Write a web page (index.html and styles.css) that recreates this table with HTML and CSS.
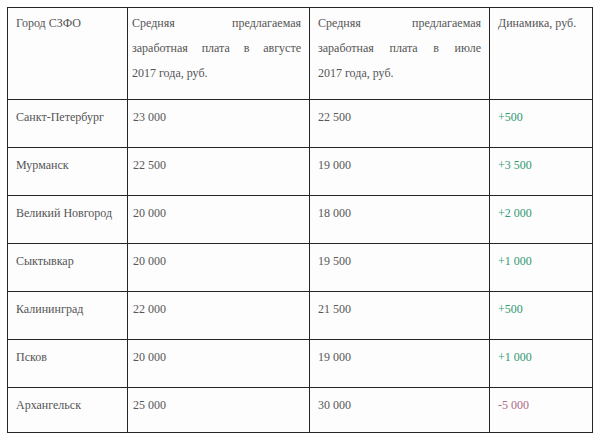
FILE: index.html
```html
<!DOCTYPE html>
<html lang="ru">
<head>
<meta charset="utf-8">
<title>Зарплаты СЗФО</title>
<link rel="stylesheet" href="styles.css">
</head>
<body>
<table class="salary">
  <colgroup>
    <col class="c-city">
    <col class="c-aug">
    <col class="c-jul">
    <col class="c-dyn">
  </colgroup>
  <thead>
    <tr>
      <th class="city">Город СЗФО</th>
      <th class="num"><span class="jl">Средняя предлагаемая</span><span class="jl">заработная плата в августе</span><span class="ll">2017 года, руб.</span></th>
      <th class="num"><span class="jl">Средняя предлагаемая</span><span class="jl">заработная плата в июле</span><span class="ll">2017 года, руб.</span></th>
      <th class="dyn">Динамика, руб.</th>
    </tr>
  </thead>
  <tbody>
    <tr><td class="city">Санкт-Петербург</td><td class="num">23 000</td><td class="num">22 500</td><td class="dyn up">+500</td></tr>
    <tr><td class="city">Мурманск</td><td class="num">22 500</td><td class="num">19 000</td><td class="dyn up">+3 500</td></tr>
    <tr><td class="city">Великий Новгород</td><td class="num">20 000</td><td class="num">18 000</td><td class="dyn up">+2 000</td></tr>
    <tr><td class="city">Сыктывкар</td><td class="num">20 000</td><td class="num">19 500</td><td class="dyn up">+1 000</td></tr>
    <tr><td class="city">Калининград</td><td class="num">22 000</td><td class="num">21 500</td><td class="dyn up">+500</td></tr>
    <tr><td class="city">Псков</td><td class="num">20 000</td><td class="num">19 000</td><td class="dyn up">+1 000</td></tr>
    <tr><td class="city">Архангельск</td><td class="num">25 000</td><td class="num">30 000</td><td class="dyn down">-5 000</td></tr>
  </tbody>
</table>
</body>
</html>
```
FILE: styles.css
```css
html, body {
  margin: 0;
  padding: 0;
  background: #ffffff;
}

body {
  padding: 7px 0 0 7px;
  font-family: "Liberation Serif", "DejaVu Serif", serif;
  font-size: 12px;
  color: #555555;
}

.salary {
  border-collapse: collapse;
  table-layout: fixed;
  width: 585px;
  background: #fdfdfd;
}

.c-city { width: 120px; }
.c-aug { width: 182px; }
.c-jul { width: 180px; }
.c-dyn { width: 103px; }

.salary th,
.salary td {
  border: 1px solid #262626;
  vertical-align: top;
  text-align: left;
  font-weight: normal;
  line-height: 25px;
  box-sizing: border-box;
  white-space: nowrap;
}

.salary th {
  height: 92px;
  padding: 3px 8px 0 8px;
}

.salary th.num {
  white-space: normal;
}

.salary th.num:nth-child(2) {
  padding-left: 4px;
}

.salary td {
  height: 48px;
  padding: 5px 8px 0 8px;
}

.salary tbody tr:last-child td {
  height: 45px;
}

.salary td.num:nth-child(2) {
  padding-left: 5px;
}

.jl {
  display: block;
  text-align: justify;
  text-align-last: justify;
}

.ll {
  display: block;
}

.salary td.num {
  color: #585858;
}

.dyn.up {
  color: #2f9a70;
}

.dyn.down {
  color: #b06a86;
}
```
